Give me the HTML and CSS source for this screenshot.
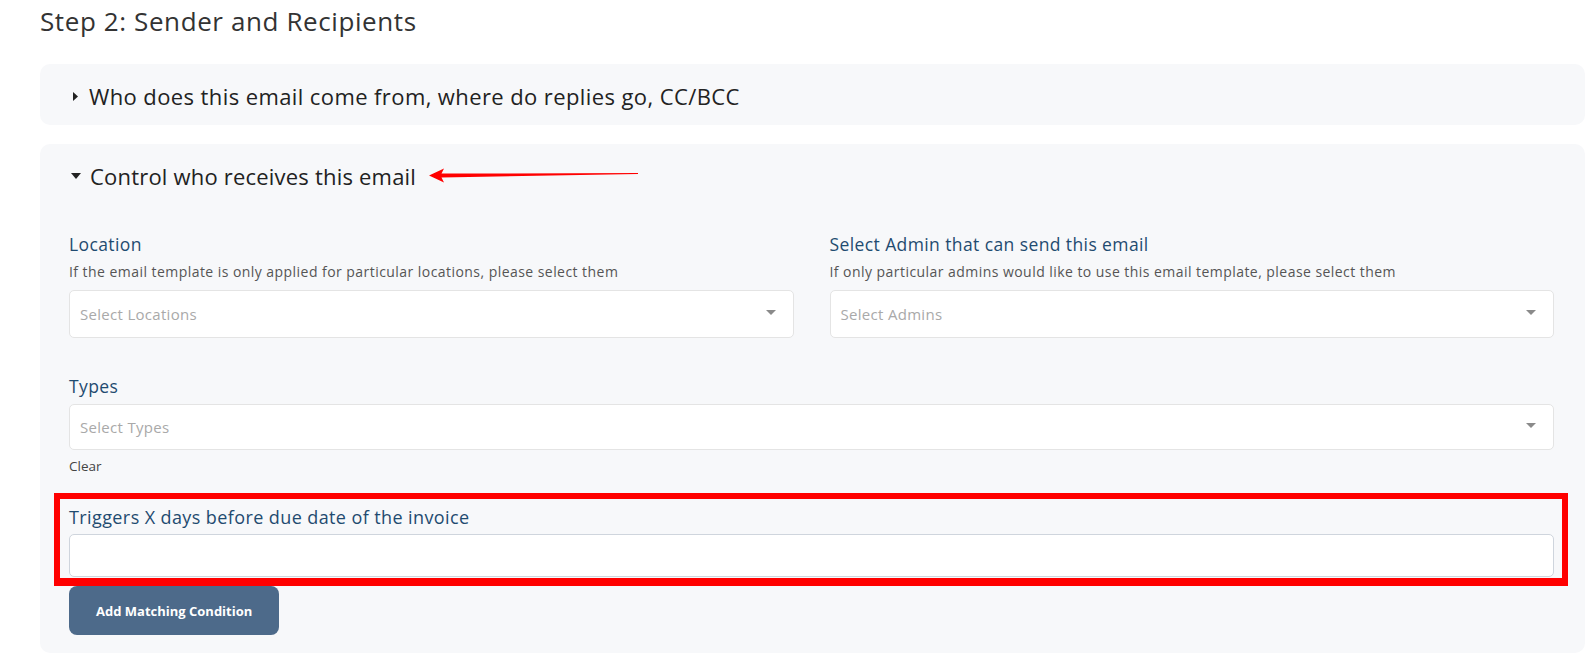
FILE: index.html
```html
<!DOCTYPE html>
<html lang="en">
<head>
    <meta charset="UTF-8">
    <meta name="viewport" content="width=device-width, initial-scale=1.0">
    <title>Step 2: Sender and Recipients</title>
    <link rel="stylesheet" href="styles.css">
</head>
<body>
    <div class="page">
        <h2 class="step-title">Step 2: Sender and Recipients</h2>

        <div class="panel panel-closed">
            <div class="panel-head">
                <svg class="caret-right" width="5" height="9" viewBox="0 0 5 9"><path d="M0 0 L5 4.5 L0 9 Z" fill="#222"/></svg>
                <span>Who does this email come from, where do replies go, CC/BCC</span>
            </div>
        </div>

        <div class="panel panel-open">
            <div class="panel-head">
                <svg class="caret-down" width="10" height="6" viewBox="0 0 10 6"><path d="M0 0 L10 0 L5 6 Z" fill="#222"/></svg>
                <span>Control who receives this email</span>
                <!-- annotation arrow -->
                <svg class="note-arrow" width="210" height="18" viewBox="0 0 210 18">
                    <path d="M0 9.5 L15 2.5 L12.5 7.6 L209 7 L209 7.9 L12.5 11.6 L15 16.5 Z" fill="#ff0000"/>
                </svg>
            </div>

            <div class="field-row">
                <div class="field">
                    <div class="field-label">Location</div>
                    <div class="field-help">If the email template is only applied for particular locations, please select them</div>
                    <div class="select">
                        <span class="placeholder">Select Locations</span>
                        <span class="select-caret"></span>
                    </div>
                </div>
                <div class="field">
                    <div class="field-label">Select Admin that can send this email</div>
                    <div class="field-help">If only particular admins would like to use this email template, please select them</div>
                    <div class="select">
                        <span class="placeholder">Select Admins</span>
                        <span class="select-caret"></span>
                    </div>
                </div>
            </div>

            <div class="field field-types">
                <div class="field-label">Types</div>
                <div class="select select-short">
                    <span class="placeholder">Select Types</span>
                    <span class="select-caret"></span>
                </div>
                <div class="clear-link">Clear</div>
            </div>

            <div class="highlight">
                <div class="field-label field-label-lg">Triggers X days before due date of the invoice</div>
                <input class="text-input" type="text">
            </div>

            <button class="add-btn">Add Matching Condition</button>
        </div>
    </div>
</body>
</html>
```

FILE: styles.css
```css
* {
    margin: 0;
    padding: 0;
    box-sizing: border-box;
}

body {
    font-family: 'Open Sans', 'Noto Sans', sans-serif;
    background: #ffffff;
    color: #333;
}

.page {
    padding: 0 5px 0 40px;
}

.step-title {
    font-size: 26px;
    font-weight: 400;
    line-height: 42px;
    letter-spacing: 0.6px;
    color: #333;
    margin-bottom: 22px;
}

.panel {
    background: #f7f8fa;
    border-radius: 10px;
}

.panel-closed {
    height: 61px;
    padding: 3px 30px 0 31px;
    display: flex;
    align-items: center;
    margin-bottom: 19px;
}

.panel-open {
    padding: 0 31px 18px 29px;
}

.panel-head {
    display: flex;
    align-items: center;
    font-size: 22px;
    color: #222;
}

.panel-closed .panel-head {
    letter-spacing: 0.4px;
}

.panel-open .panel-head {
    height: 64px;
    padding-left: 2px;
    letter-spacing: 0.2px;
}

.caret-right {
    margin: 0 11px 0 2px;
}

.caret-down {
    margin-right: 9px;
}

.note-arrow {
    margin-left: 13px;
    margin-top: -2px;
}

.field-row {
    display: grid;
    grid-template-columns: 1fr 1fr;
    gap: 36px;
    margin-top: 24px;
}

.field-label {
    font-size: 17.5px;
    line-height: 24px;
    letter-spacing: 0.4px;
    color: #1f4b70;
}

.field-label-lg {
    font-size: 18px;
}

.field-help {
    font-size: 14px;
    line-height: 18px;
    letter-spacing: 0.45px;
    color: #555;
    margin: 7px 0 9px;
}

.select {
    height: 48px;
    background: #fff;
    border: 1px solid #e4e4e4;
    border-radius: 5px;
    display: flex;
    align-items: center;
    justify-content: space-between;
    padding: 0 17px 0 10px;
}

.select-short {
    height: 46px;
    margin-top: 6px;
}

.placeholder {
    font-size: 15px;
    letter-spacing: 0.3px;
    color: #a9a9a9;
}

.select-caret {
    width: 0;
    height: 0;
    border-left: 5px solid transparent;
    border-right: 5px solid transparent;
    border-top: 5px solid #8a8a8a;
    margin-top: -3px;
}

.field-types {
    margin-top: 36px;
}

.clear-link {
    font-size: 13.5px;
    line-height: 18px;
    color: #444;
    margin-top: 7px;
}

.highlight {
    margin: 18px -14px 0 -15px;
    border: 6px solid #ff0000;
    border-bottom-width: 8px;
    padding: 6px 8px 1px 9px;
}

.text-input {
    display: block;
    width: 100%;
    height: 43px;
    margin-top: 5px;
    background: #fff;
    border: 1px solid #cfd5dd;
    border-radius: 5px;
    outline: none;
}

.add-btn {
    display: block;
    height: 49px;
    padding: 0 27px;
    background: #4d6a8a;
    color: #fff;
    border: none;
    border-radius: 8px;
    font-family: inherit;
    font-size: 13px;
    font-weight: 700;
    cursor: pointer;
}
```
